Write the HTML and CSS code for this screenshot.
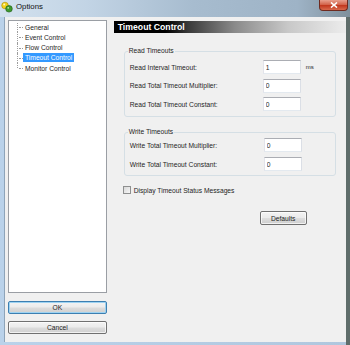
FILE: index.html
```html
<!DOCTYPE html>
<html lang="en">
<head>
  <meta charset="UTF-8">
  <title>Options</title>
  <link rel="stylesheet" href="styles.css">
</head>
<body>
  <div class="window">
    <div class="titlebar">
      <svg class="app-icon" width="12" height="12" viewBox="0 0 12 12">
        <circle cx="4" cy="4.5" r="3.3" fill="#f2d21c" stroke="#a88a00" stroke-width="0.6"/>
        <circle cx="8" cy="7.8" r="3.3" fill="#3f9a2c" stroke="#1f5a16" stroke-width="0.6"/>
        <circle cx="3.2" cy="3.4" r="1" fill="#fff8c0"/>
        <circle cx="7.2" cy="6.8" r="0.9" fill="#b9e6a8"/>
      </svg>
      <span class="title">Options</span>
      <div class="close">
        <svg width="8" height="6" viewBox="0 0 8 6">
          <path d="M1 0.5 L7 5.5 M7 0.5 L1 5.5" stroke="#fff" stroke-width="1.6"/>
        </svg>
      </div>
    </div>

    <div class="client">
      <div class="side">
        <ul class="tree">
          <li class="first"><span>General</span></li>
          <li><span>Event Control</span></li>
          <li><span>Flow Control</span></li>
          <li class="selected"><span>Timeout Control</span></li>
          <li class="last"><span>Monitor Control</span></li>
        </ul>
        <button class="btn btn-default btn-ok">OK</button>
        <button class="btn btn-cancel">Cancel</button>
      </div>

      <div class="main">
        <div class="header">Timeout Control</div>

        <fieldset class="group group-read">
          <legend>Read Timeouts</legend>
          <div class="row">
            <label>Read Interval Timeout:</label>
            <input class="field" type="text" value="1">
            <span class="unit">ms</span>
          </div>
          <div class="row">
            <label>Read Total Timeout Multiplier:</label>
            <input class="field" type="text" value="0">
          </div>
          <div class="row">
            <label>Read Total Timeout Constant:</label>
            <input class="field" type="text" value="0">
          </div>
        </fieldset>

        <fieldset class="group group-write">
          <legend>Write Timeouts</legend>
          <div class="row">
            <label>Write Total Timeout Multiplier:</label>
            <input class="field" type="text" value="0">
          </div>
          <div class="row">
            <label>Write Total Timeout Constant:</label>
            <input class="field" type="text" value="0">
          </div>
        </fieldset>

        <div class="check-row">
          <span class="check"></span>
          <span>Display Timeout Status Messages</span>
        </div>

        <div class="defaults-row">
          <button class="btn btn-defaults">Defaults</button>
        </div>
      </div>
    </div>
  </div>
</body>
</html>
```

FILE: styles.css
```css
* { box-sizing: border-box; }

body {
  margin: 0;
  font-family: 'Liberation Sans', Arial, sans-serif;
  font-size: 6.7px;
  color: #1e1e1e;
}

.window {
  width: 350px;
  height: 345px;
  display: flex;
  flex-direction: column;
  background: linear-gradient(to right, #bad2ea 0, #b0c7de 346px, #5f6d6b 346px);
}

/* title bar */
.titlebar {
  height: 17px;
  display: flex;
  align-items: flex-start;
  padding: 1px 0 0 1px;
  background: linear-gradient(to right, #d3e1ee 0%, #c2d4e5 25%, #a7bccf 55%, #9eb3c6 85%, #7f909c 100%);
}

.app-icon { flex: none; }

.title {
  margin-left: 3px;
  margin-top: 1px;
  font-size: 7.8px;
  line-height: 10px;
  color: #111;
}

.close {
  margin-left: auto;
  margin-right: 2px;
  margin-top: -1px;
  width: 29px;
  height: 11px;
  display: flex;
  align-items: center;
  justify-content: center;
  border: 1px solid #6e2a1f;
  border-top: none;
  border-radius: 0 0 4px 4px;
  background: linear-gradient(#e8a08e 0%, #d3654c 45%, #c2391f 55%, #d8694c 100%);
}

/* client area */
.client {
  flex: 1;
  display: flex;
  margin: 0 4px 3px 4px;
  padding: 3px 0 0 3px;
  background: #f0f0f0;
  border: 1px solid #8ea4b9;
  border-width: 0 0 0 1px;
}

.side {
  width: 99px;
  display: flex;
  flex-direction: column;
}

.tree {
  list-style: none;
  margin: 0;
  padding: 1px 0 0 0;
  height: 273px;
  background: #fff;
  border: 1px solid #9a9ea4;
}

.tree li {
  position: relative;
  height: 10.25px;
  line-height: 10.25px;
  padding-left: 14px;
}

.tree li::before {
  content: "";
  position: absolute;
  left: 8px;
  top: 0;
  bottom: 0;
  border-left: 1px dotted #9c9c9c;
}

.tree li.first::before { top: 1px; }
.tree li.last::before { bottom: 50%; }

.tree li::after {
  content: "";
  position: absolute;
  left: 10px;
  top: 50%;
  width: 4px;
  border-top: 1px dotted #9c9c9c;
}

.tree span {
  display: inline-block;
  padding: 0 2px;
  line-height: 9px;
  vertical-align: middle;
}

.tree .selected span {
  background: #3399ff;
  color: #fff;
}

/* buttons */
.btn {
  font-family: inherit;
  font-size: 6.7px;
  color: #1e1e1e;
  padding: 0;
  border: 1px solid #707070;
  border-radius: 2px;
  background: linear-gradient(#f3f3f3 0%, #ebebeb 48%, #dddddd 52%, #cfcfcf 100%);
  box-shadow: inset 0 0 0 1px rgba(255, 255, 255, 0.7);
}

.btn-ok {
  margin-top: 8px;
  height: 13px;
}

.btn-default {
  border-color: #3c7fb1;
  box-shadow: inset 0 0 0 1px #9ed3f2;
}

.btn-cancel {
  margin-top: 7px;
  height: 13px;
}

/* right panel */
.main {
  width: 233px;
  margin-left: 7px;
}

.header {
  margin-top: 1px;
  height: 12px;
  line-height: 12px;
  padding-left: 4px;
  font-size: 8.7px;
  font-weight: bold;
  color: #fff;
  background: linear-gradient(to right, #000 0%, #000 22%, #3a3a3a 32%, #8a8a8a 52%, #c8c8c8 75%, #ececec 100%);
}

.group {
  margin: 0 10px;
  padding: 0 5px;
  border: 1px solid #d5dfe5;
  border-radius: 3px;
}

.group legend {
  margin-left: -2px;
  padding: 0 1px;
  line-height: 8px;
}

.group-read {
  margin-top: 14px;
  padding-top: 5px;
  padding-bottom: 5px;
}

.group-write {
  margin-top: 11px;
  padding-top: 2px;
  padding-bottom: 4px;
}

.row {
  display: flex;
  align-items: center;
  height: 14px;
  margin-bottom: 4.5px;
}

.row:last-child { margin-bottom: 0; }

.group-write .row { margin-bottom: 5px; }
.group-write .row:last-child { margin-bottom: 0; }

.row label {
  width: 133px;
  flex: none;
}

.group-write .row label { width: 134px; }

.field {
  width: 38px;
  height: 14px;
  padding: 0 2px;
  font-family: inherit;
  font-size: 6.7px;
  color: #1e1e1e;
  background: #fff;
  border: 1px solid #abadb3;
  border-color: #abadb3 #dbdfe6 #e3e9ef #e2e3ea;
  outline: none;
}

.unit {
  margin-left: 5px;
  font-size: 6px;
}

.check-row {
  display: flex;
  align-items: center;
  margin: 10px 0 0 9px;
  height: 8px;
}

.check {
  width: 8px;
  height: 8px;
  margin-right: 3px;
  border: 1px solid #8e8f8f;
  background: linear-gradient(135deg, #d8d8d8, #f7f7f7);
}

.defaults-row {
  margin-top: 17px;
  padding-left: 146px;
}

.btn-defaults {
  width: 47px;
  height: 14px;
}
```
